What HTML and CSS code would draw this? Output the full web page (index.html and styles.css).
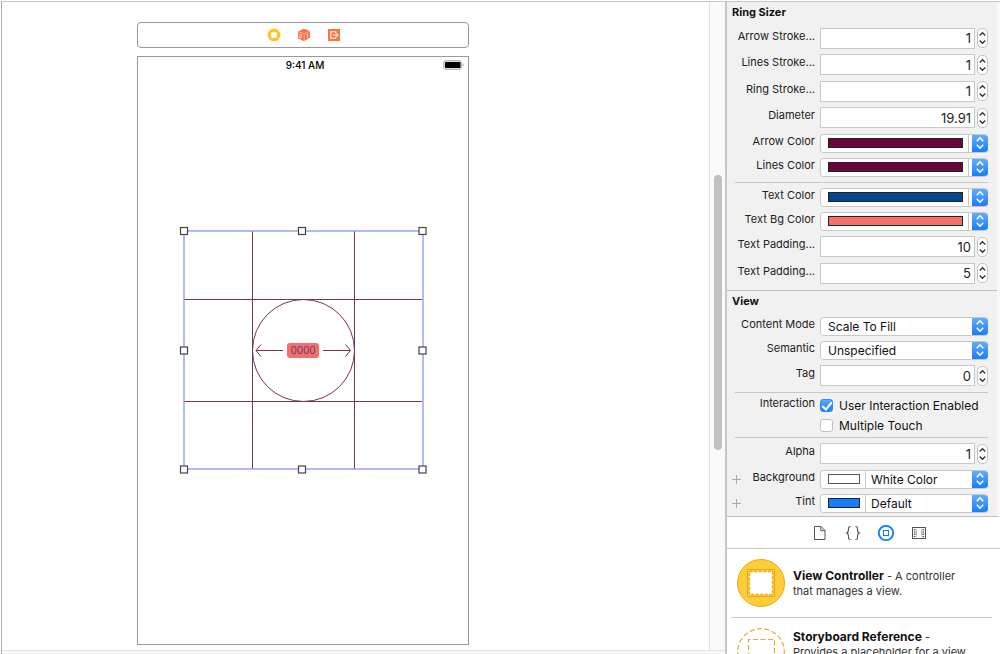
FILE: index.html
```html
<!DOCTYPE html>
<html lang="en">
<head>
<meta charset="utf-8">
<title>Interface Builder</title>
<link rel="stylesheet" href="styles.css">
</head>
<body>
<svg class="defs" aria-hidden="true">
  <symbol id="updown" viewBox="0 0 10 16"><path d="M1.8 6.2 5 2.8l3.2 3.4M1.8 9.8 5 13.2l3.2-3.4"/></symbol>
  <symbol id="up" viewBox="0 0 9 9"><path d="M1.700 6.500 4.500 3.700l2.800 2.800"/></symbol>
  <symbol id="down" viewBox="0 0 9 9"><path d="M1.700 2.500 4.500 5.300l2.800-2.800"/></symbol>
</svg>
<div class="window">
  <main class="editor">
    <div class="canvas">
      <div class="scene">
        <div class="dock">
          <button class="plain" aria-label="View Controller"><svg width="14" height="14" viewBox="0 0 14 14"><circle cx="7" cy="7" r="6.5" fill="#fbc52d"/><rect x="4.2" y="4.2" width="5.6" height="5.6" rx=".8" fill="#fff"/></svg></button>
          <button class="plain" aria-label="First Responder"><svg width="14" height="14" viewBox="0 0 14 14"><path d="M1 3.6 6.8.8 13 3v6.5l-5.8 3.8L1.2 10.400z" fill="#fb7044"/><path d="M1 3.700l6.300 1.900L13 3.100M7.300 5.600v7.500" fill="none" stroke="#fff" stroke-opacity=".65" stroke-width=".7"/><path d="M2.500 6.100l2.400.8v1.500l-2.200-.5v1.700l2.400.8M9.200 6.800l1.300-.8v4" fill="none" stroke="#fff" stroke-opacity=".7" stroke-width=".8"/></svg></button>
          <button class="plain" aria-label="Exit"><svg width="14" height="14" viewBox="0 0 14 14"><rect x="1" y="1" width="12" height="12" fill="#fc7440"/><path d="M8.700 5.300V3.800H3.900v6.400h4.800V8.700M6 7h5M9.400 5.400 11 7 9.400 8.600" fill="none" stroke="#fff" stroke-width="1.100"/></svg></button>
        </div>
        <div class="phone">
          <div class="status">
            <span></span><span class="clock">9:41 AM</span>
            <svg width="21" height="10" viewBox="0 0 21 10"><rect x=".5" y=".5" width="18" height="9" rx="2.500" fill="#ddd" stroke="#bbb"/><rect x="2" y="2" width="15.500" height="6" rx=".8" fill="#000"/><path d="M20 3.500v3" stroke="#aaa"/></svg>
          </div>
          <svg class="ring" width="248" height="248" viewBox="0 0 248 248" role="img" aria-label="Ring sizer">
            <g fill="none" stroke="#7a3350">
              <path d="M73.500 5v238M175.500 5v238M5 73.500h238M5 175.500h238"/>
              <circle cx="124.500" cy="124.500" r="51"/>
              <path d="M77 124.500h27M82 118.500l-5 6 5 6M144 124.500h27M166.500 118.500l5 6-5 6"/>
            </g>
            <rect x="5" y="5" width="239" height="238" fill="none" stroke="#8a96fb" stroke-width="1.300"/>
            <rect x="108" y="117" width="32" height="15" rx="3" fill="#f56e6c"/>
            <text class="measure" x="124" y="128" text-anchor="middle">0000</text>
            <g fill="#fff" stroke="#444" stroke-width="1.200">
              <rect x="1.500" y="1.500" width="7" height="7"/><rect x="119.500" y="1.500" width="7" height="7"/><rect x="240" y="1.500" width="7" height="7"/>
              <rect x="1.500" y="121" width="7" height="7"/><rect x="240" y="121" width="7" height="7"/>
              <rect x="1.500" y="240" width="7" height="7"/><rect x="119.500" y="240" width="7" height="7"/><rect x="240" y="240" width="7" height="7"/>
            </g>
          </svg>
        </div>
      </div>
    </div>
    <div class="vtrack"><div class="thumb"></div></div>
    <div class="htrack"></div>
  </main>

  <aside class="side">
    <div class="inspector">
      <section class="group sizer">
        <h2>Ring Sizer</h2>
        <div class="row num"><label for="arrow">Arrow Stroke...</label><input id="arrow" type="text" value="1"><span class="stepper"><button aria-label="Increase"><svg><use href="#up"/></svg></button><button aria-label="Decrease"><svg><use href="#down"/></svg></button></span></div>
        <div class="row num"><label for="lines">Lines Stroke...</label><input id="lines" type="text" value="1"><span class="stepper"><button aria-label="Increase"><svg><use href="#up"/></svg></button><button aria-label="Decrease"><svg><use href="#down"/></svg></button></span></div>
        <div class="row num"><label for="ringw">Ring Stroke...</label><input id="ringw" type="text" value="1"><span class="stepper"><button aria-label="Increase"><svg><use href="#up"/></svg></button><button aria-label="Decrease"><svg><use href="#down"/></svg></button></span></div>
        <div class="row num"><label for="diam">Diameter</label><input id="diam" type="text" value="19.91"><span class="stepper"><button aria-label="Increase"><svg><use href="#up"/></svg></button><button aria-label="Decrease"><svg><use href="#down"/></svg></button></span></div>
        <div class="row"><label for="ac">Arrow Color</label><div class="popup"><button id="ac" class="well wide"><span class="swatch plum"></span></button><button class="cap" aria-label="Choose arrow color"><svg><use href="#updown"/></svg></button></div></div>
        <div class="row"><label for="lc">Lines Color</label><div class="popup"><button id="lc" class="well wide"><span class="swatch plum"></span></button><button class="cap" aria-label="Choose lines color"><svg><use href="#updown"/></svg></button></div></div>
        <hr>
        <div class="row"><label for="tc">Text Color</label><div class="popup"><button id="tc" class="well wide"><span class="swatch navy"></span></button><button class="cap" aria-label="Choose text color"><svg><use href="#updown"/></svg></button></div></div>
        <div class="row"><label for="bc">Text Bg Color</label><div class="popup"><button id="bc" class="well wide"><span class="swatch coral"></span></button><button class="cap" aria-label="Choose text background color"><svg><use href="#updown"/></svg></button></div></div>
        <div class="row num"><label for="px">Text Padding...</label><input id="px" type="text" value="10"><span class="stepper"><button aria-label="Increase"><svg><use href="#up"/></svg></button><button aria-label="Decrease"><svg><use href="#down"/></svg></button></span></div>
        <div class="row num"><label for="py">Text Padding...</label><input id="py" type="text" value="5"><span class="stepper"><button aria-label="Increase"><svg><use href="#up"/></svg></button><button aria-label="Decrease"><svg><use href="#down"/></svg></button></span></div>
      </section>
      <section class="group">
        <h2>View</h2>
        <div class="row"><label for="mode">Content Mode</label><div class="popup"><select id="mode"><option>Scale To Fill</option></select><span class="cap"><svg><use href="#updown"/></svg></span></div></div>
        <div class="row"><label for="sem">Semantic</label><div class="popup"><select id="sem"><option>Unspecified</option></select><span class="cap"><svg><use href="#updown"/></svg></span></div></div>
        <div class="row num"><label for="tag">Tag</label><input id="tag" type="text" value="0"><span class="stepper"><button aria-label="Increase"><svg><use href="#up"/></svg></button><button aria-label="Decrease"><svg><use href="#down"/></svg></button></span></div>
        <hr>
        <div class="row check"><span class="name">Interaction</span><label class="tick"><input type="checkbox" checked>User Interaction Enabled</label></div>
        <div class="row check"><span></span><label class="tick"><input type="checkbox">Multiple Touch</label></div>
        <hr class="tight">
        <div class="row num"><label for="alpha">Alpha</label><input id="alpha" type="text" value="1"><span class="stepper"><button aria-label="Increase"><svg><use href="#up"/></svg></button><button aria-label="Decrease"><svg><use href="#down"/></svg></button></span></div>
        <div class="row"><button class="plain add" aria-label="Add background variation"><svg width="9" height="9"><path d="M4.500 0v9M0 4.500h9" stroke="#aaa"/></svg></button><label for="bg">Background</label><div class="popup"><button class="well" aria-label="Background color"><span class="swatch white"></span></button><select id="bg" class="short"><option>White Color</option></select><span class="cap"><svg><use href="#updown"/></svg></span></div></div>
        <div class="row"><button class="plain add" aria-label="Add tint variation"><svg width="9" height="9"><path d="M4.500 0v9M0 4.500h9" stroke="#aaa"/></svg></button><label for="tint">Tint</label><div class="popup"><button class="well" aria-label="Tint color"><span class="swatch blue"></span></button><select id="tint" class="short"><option>Default</option></select><span class="cap"><svg><use href="#updown"/></svg></span></div></div>
      </section>
    </div>
    <nav class="tabs">
      <button class="plain" aria-label="File templates"><svg width="18" height="18" viewBox="0 0 18 18" fill="none" stroke="#555"><path d="M3.500 2.500h6.500l4 4v9h-10.500zM9.800 2.500v4.200h4.200"/></svg></button>
      <button class="plain" aria-label="Code snippets"><svg width="18" height="18" viewBox="0 0 18 18" fill="none" stroke="#555" stroke-width="1.100"><path d="M6.500 2.500C4.300 2.500 4.500 3.800 4.500 5.200 4.500 7.200 4.300 8.500 2.800 9c1.500.5 1.700 1.800 1.700 3.800 0 1.400-.2 2.700 2 2.700M11.500 2.500c2.200 0 2 1.300 2 2.700 0 2 .2 3.300 1.700 3.800-1.500.5-1.700 1.800-1.700 3.800 0 1.400.2 2.700-2 2.700"/></svg></button>
      <button class="plain" aria-label="Objects"><svg width="18" height="18" viewBox="0 0 18 18" fill="none" stroke="#0a7aff"><circle cx="9" cy="9" r="7.200" stroke-width="1.800"/><rect x="6.500" y="6.500" width="5" height="5"/></svg></button>
      <button class="plain" aria-label="Media"><svg width="18" height="18" viewBox="0 0 18 18" fill="none" stroke="#555"><rect x="2.500" y="3.500" width="13" height="11"/><path d="M4.700 5v8.500M13.300 5v8.500" stroke-width="1.600" stroke-dasharray="1.300 1"/><path d="M6.500 5.500v7M11.500 5.500v7" stroke="#bbb"/></svg></button>
    </nav>
    <ul class="library">
      <li><svg width="48" height="48" viewBox="0 0 48 48"><circle cx="24" cy="24" r="23.500" fill="#fecd37" stroke="#e6a91b"/><rect x="10.500" y="10.500" width="27" height="27" rx="1" fill="#fecd37" stroke="#e0a526"/><rect x="12.500" y="12.500" width="23" height="23" fill="#fff" stroke="#efac14" stroke-width="1.300" stroke-dasharray="3 1.600"/></svg><p><strong>View Controller</strong> - A controller that manages a view.</p></li>
      <li><svg width="48" height="48" viewBox="0 0 48 48" fill="none" stroke="#e9ab2c" stroke-width="1.200"><circle cx="24" cy="24" r="23.300" stroke-dasharray="5 2.500"/><path d="M11.500 37V11.500h26V37" stroke-dasharray="5 2.500"/></svg><p><strong>Storyboard Reference</strong> - Provides a placeholder for a view controller.</p></li>
    </ul>
  </aside>
</div>
</body>
</html>
```
FILE: styles.css
```css
* { box-sizing: border-box; }

body {
  margin: 0;
  height: 100vh;
  overflow: hidden;
  background: #fff;
  color: #222;
  font: 11px/15px Inter, "Liberation Sans", sans-serif;
}

.defs { display: none; }

button, input, select { font: inherit; color: inherit; margin: 0; }

.window {
  display: flex;
  height: 100%;
  padding-top: 1px;
}

.plain {
  display: flex;
  padding: 0;
  border: 0;
  background: none;
}

/* Editor */

.editor {
  flex: 1;
  min-width: 0;
  display: grid;
  grid-template: minmax(0, 1fr) 4px / minmax(0, 1fr) 16px;
  margin-left: 1px;
  border-top: 1px solid #c8c8c8;
  border-left: 1px solid #aaa;
}

.canvas {
  padding: 20px 0 5px 135px;
  overflow: hidden;
}

.scene {
  display: flex;
  flex-direction: column;
  gap: 8px;
  width: 332px;
  height: 100%;
}

.dock {
  display: flex;
  justify-content: center;
  align-items: center;
  gap: 16px;
  height: 26px;
  padding-left: 2px;
  border: 1px solid #999;
  border-radius: 4px;
}

.phone {
  flex: 1;
  display: grid;
  border: 1px solid #999;
}

.status, .ring { grid-area: 1 / 1; }

.status {
  display: grid;
  grid-template-columns: 1fr auto 1fr;
  align-items: center;
  align-self: start;
  padding: 2px 4px 0 8px;
  line-height: 12px;
  font-size: 10px;
  font-weight: 500;
  color: #000;
}

.status svg { justify-self: end; }

.ring {
  place-self: center;
  margin-bottom: 2px;
}

.measure {
  font-size: 10px;
  fill: #5b3f73;
}

.vtrack {
  display: grid;
  grid-template-rows: 173fr 275fr 200fr;
  justify-content: center;
  background: #fafafa;
  border-left: 1px solid #e4e4e4;
}

.thumb {
  grid-row: 2;
  width: 8px;
  border-radius: 4px;
  background: #c1c1c1;
}

.htrack {
  grid-column: 1 / 3;
  background: #f8f8f8;
  border-top: 1px solid #e4e4e4;
}

/* Inspector */

.side {
  flex: 0 0 275px;
  display: flex;
  flex-direction: column;
  border-left: 2px solid #c6c6c6;
  border-top: 1px solid #c8c8c8;
}

.inspector {
  padding-bottom: 1px;
  background: #f1f1f1;
  border-bottom: 1px solid #c0c0c0;
  border-right: 3px solid #f8f8f8;
}

.group { padding-right: 9px; }

.group + .group {
  margin-top: 4px;
  border-top: 1px solid #c0c0c0;
}

h2 {
  margin: 0;
  padding-left: 5px;
  font-size: 11px;
  font-weight: 700;
  line-height: 21px;
  height: 23px;
  color: #111;
}

.row {
  display: grid;
  grid-template-columns: 14px 74px minmax(0, 1fr) auto;
  align-items: center;
  height: 24px;
}

.row > label:first-child, .row > .name, .row > span:first-child { grid-column: 1 / 3; }
.row > .add { padding-left: 5px; }

.row > label, .row > .name {
  padding-bottom: 4px;
  text-align: right;
  white-space: nowrap;
}

.num { height: 27px; }
.sizer .num:nth-child(even) { height: 26px; }
.check { height: 20px; }

.num input, .popup { margin-left: 5px; }

.num input {
  width: auto;
  min-width: 0;
  height: 21px;
  padding: 0 3px;
  border: 1px solid #c9c9c9;
  border-radius: 0;
  background: #fff;
  text-align: right;
  font-size: 13px;
}

.stepper {
  display: flex;
  flex-direction: column;
  width: 11px;
  height: 20px;
  margin-left: 2px;
  border: 1px solid #c4c4c4;
  border-radius: 5px;
  background: #fff;
}

.stepper button {
  flex: 1;
  display: flex;
  padding: 0;
  border: 0;
  background: none;
}

.stepper svg {
  width: 9px;
  height: 9px;
  fill: none;
  stroke: #333;
  stroke-width: 1.3px;
}

.popup {
  grid-column: 3 / 5;
  display: flex;
  height: 19px;
  border-radius: 4px;
  overflow: hidden;
  background: #fff;
  border: 1px solid #c8c8c8;
  border-right: 0;
}

.popup select {
  flex: 1;
  min-width: 0;
  appearance: none;
  padding: 0 7px;
  border: 0;
  background: #fff;
  font-size: 12px;
  color: #111;
}

.popup .short { padding: 0 5px; }

.cap {
  display: flex;
  align-items: center;
  justify-content: center;
  width: 16px;
  padding: 0;
  border: 0;
  background: linear-gradient(#62aefc, #1b7bfb);
}

.cap svg {
  width: 10px;
  height: 16px;
  fill: none;
  stroke: #fff;
  stroke-width: 1.5px;
}

.well {
  display: flex;
  align-items: center;
  width: 45px;
  padding: 0 5px 0 7px;
  border: 0;
  border-right: 1px solid #c8c8c8;
  background: #fff;
}

.well.wide {
  flex: 1;
  width: auto;
  margin-right: 3px;
}

.swatch {
  flex: 1;
  height: 10px;
  border: 1px solid #222;
}

.plum { background: #6b063b; }
.navy { background: #04488b; }
.coral { background: #f56e6c; }
.white { background: #fff; border-color: #555; }
.blue { background: #157efb; }

.tick {
  display: flex;
  align-items: center;
  gap: 6px;
  grid-column: 3 / 5;
  margin-left: 5px;
  font-size: 12px;
  color: #111;
}

.row > .tick { padding-bottom: 0; }

.tick input {
  appearance: none;
  width: 13px;
  height: 13px;
  border: 1px solid #c0c0c0;
  border-radius: 3px;
  background: #fff;
}

.tick input:checked {
  border-color: #2f86f5;
  background: linear-gradient(#5aa9fb, #1f7ffb);
}

.tick input:checked::before {
  content: "";
  display: block;
  width: 4px;
  height: 8px;
  margin: 0 auto;
  border: solid #fff;
  border-width: 0 2px 2px 0;
  transform: rotate(40deg);
}

hr {
  height: 1px;
  margin: 3px 0 2px 8px;
  border: 0;
  background: #c8c8c8;
}

hr.tight { margin-top: 2px; }

/* Library */

.tabs {
  display: flex;
  justify-content: center;
  align-items: center;
  gap: 15px;
  height: 32px;
  padding-left: 12px;
  border-bottom: 1px solid #c6c6c6;
}

.library {
  flex: 1;
  min-height: 0;
  margin: 0;
  padding: 0 8px 0 4px;
  overflow: hidden;
  list-style: none;
}

.library li {
  display: flex;
  align-items: center;
  gap: 8px;
  padding: 10px 20px 10px 6px;
  border-bottom: 1px solid #ccc;
}

.library svg { flex: none; }

.library p {
  margin: 0;
  color: #333;
}

.library strong {
  font-size: 12px;
  color: #111;
}
```
